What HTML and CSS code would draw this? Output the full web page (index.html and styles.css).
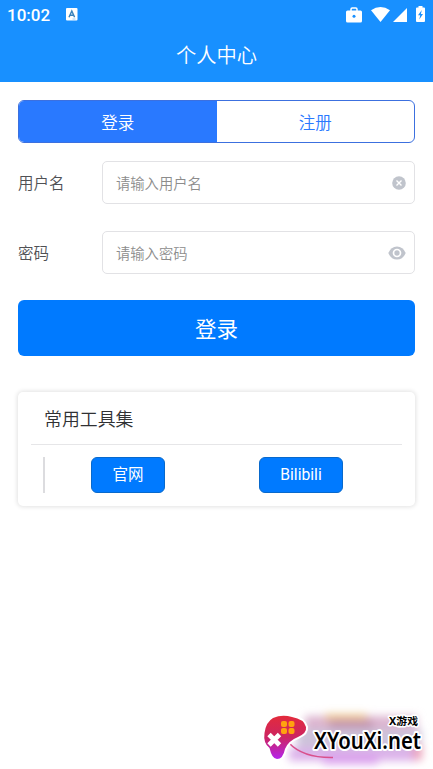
FILE: index.html
```html
<!DOCTYPE html>
<html lang="zh-CN">
<head>
<meta charset="utf-8">
<title>个人中心</title>
<link rel="stylesheet" href="styles.css">
</head>
<body>
<header class="top">
  <div class="status">
    <span class="time">10:02</span>
    <svg class="app-icon" width="12" height="13" viewBox="0 0 12 13"><rect width="11.5" height="12.6" rx="1" fill="#fff"/><path d="M3 9.2 5.8 3l2.8 6.2M4 7.3h3.600" fill="none" stroke="#3b84bd" stroke-width="1.500"/><path d="M6.500 11h3" stroke="#9ccdf5"/></svg>
    <span class="spacer"></span>
    <svg class="case" width="16" height="16" viewBox="0 0 16 16"><path d="M5 4V2.200Q5 1 6.200 1h3.600Q11 1 11 2.200V4" fill="none" stroke="#fff" stroke-width="1.500"/><rect y="3.500" width="16" height="12" rx="1.500" fill="#fff"/><circle cx="8" cy="9.300" r="1.500" fill="#1890ff"/></svg>
    <svg class="wifi" width="19" height="15" viewBox="0 0 19 15"><path d="M0 3.200Q9.500-3.200 19 3.200L9.500 15Z" fill="#fff"/></svg>
    <svg class="signal" width="14" height="14" viewBox="0 0 14 14"><path d="M14 0v14H0Z" fill="#fff"/></svg>
    <svg class="battery" width="9" height="16" viewBox="0 0 9 16"><path d="M2.500 0h4v1.500H8q1 0 1 1V15q0 1-1 1H1q-1 0-1-1V2.500q0-1 1-1h1.500Z" fill="#fff"/><path d="M5.800 4 2 9.300h2.200L3.300 13.500 7 8H4.900Z" fill="#1890ff"/></svg>
  </div>
  <h1 class="title">个人中心</h1>
</header>
<main class="content">
  <nav class="tabs"><span class="tab active">登录</span><span class="tab">注册</span></nav>
  <div class="field">
    <span class="label">用户名</span>
    <div class="input"><span>请输入用户名</span>
      <svg width="14" height="14" viewBox="0 0 14 14"><circle cx="7" cy="7" r="6.800" fill="#c0c4cc"/><path d="m4.500 4.500 5 5m0-5-5 5" stroke="#fff" stroke-width="1.400"/></svg>
    </div>
  </div>
  <div class="field second">
    <span class="label">密码</span>
    <div class="input"><span>请输入密码</span>
      <svg width="18" height="14" viewBox="0 0 18 14"><path d="M.3 7Q3 .4 9 .4T17.700 7Q15 13.600 9 13.600T.3 7Z" fill="#c0c4cc"/><circle cx="9" cy="7" r="3.500" fill="#c0c4cc" stroke="#fff" stroke-width="1.700"/></svg>
    </div>
  </div>
  <div class="submit">登录</div>
  <section class="card">
    <h2 class="card-title">常用工具集</h2>
    <div class="tools">
      <div class="cell"><span class="tool">官网</span></div>
      <div class="cell"><span class="tool wide">Bilibili</span></div>
    </div>
  </section>
</main>
<svg class="watermark" width="180" height="69" viewBox="0 0 180 69">
  <defs>
    <filter id="soft" x="-30%" y="-50%" width="160%" height="200%"><feGaussianBlur stdDeviation="4.500"/></filter>
    <linearGradient id="pad" x1="0" y1="0" x2="0" y2="1"><stop offset="0" stop-color="#e32b3b"/><stop offset=".5" stop-color="#cc2462"/><stop offset="1" stop-color="#b424ec"/></linearGradient>
  </defs>
  <g filter="url(#soft)">
    <rect x="52" y="16" width="112" height="14" fill="#dcb4cf"/>
    <rect x="72" y="14" width="42" height="7" fill="#edc58f"/>
    <rect x="76" y="20" width="44" height="9" fill="#c293b0"/>
    <rect x="44" y="29" width="124" height="20" fill="#cdc3da"/>
    <rect x="36" y="48" width="129" height="13" fill="#dcb1ea"/>
    <rect x="70" y="56" width="55" height="8" fill="#d99bed"/>
    <rect x="160" y="45" width="9" height="15" fill="#eca0b8"/>
  </g>
  <path d="M36 43Q50 58 80 57.500" fill="none" stroke="#d9508c" stroke-width="1.500"/>
  <path d="M20 18Q29 14 39 17Q51 19 53 27Q54 33 45 37Q35 41 32 49Q30 59 24 59Q19 59 16.500 48Q10 43 11.500 33Q13 22 20 18Z" fill="url(#pad)" stroke="#fff" stroke-width="4" paint-order="stroke"/>
  <g fill="#ffa20f"><rect x="28" y="21" width="6" height="6" rx="2"/><rect x="35.500" y="21" width="6" height="6" rx="2"/><rect x="28" y="28" width="6" height="6" rx="2"/><rect x="35.500" y="28" width="6" height="6" rx="2"/></g>
  <path d="m16 34.500 10.500 10.500m0-10.500L16 45" stroke="#fff" stroke-width="4.800"/>
  <text class="site" x="61" y="49" textLength="107" lengthAdjust="spacingAndGlyphs">XYouXi.net</text>
  <text class="site-name" x="136" y="25" textLength="29" lengthAdjust="spacingAndGlyphs">X游戏</text>
</svg>
</body>
</html>
```
FILE: styles.css
```css
* { box-sizing: border-box; }
body {
  margin: 0;
  height: 769px;
  position: relative;
  overflow: hidden;
  background: #fff;
  font-family: Roboto, "Noto Sans CJK SC", sans-serif;
  color: #606266;
}
svg { display: block; flex: none; }
.top { height: 82px; background: #1890ff; color: #fff; }
.status { height: 30px; padding: 0 8px 0 7px; display: flex; align-items: center; }
.time { font-size: 17px; font-weight: 500; line-height: 30px; width: 59px; }
.app-icon { margin-top: -1px; }
.spacer { flex: 1; }
.case { margin-right: 9px; margin-top: -1px; }
.wifi { margin-right: 3px; margin-top: -1px; }
.signal { margin-right: 9px; }
.battery { margin-top: -2px; }
.title { margin: 0; font-size: 20.3px; font-weight: 350; line-height: 52px; text-align: center; }
.content { padding: 18px 18px 0; }
.tabs { height: 43px; display: flex; border: 1px solid #3c70df; border-radius: 6px; overflow: hidden; }
.tab { flex: 1; color: #2979ff; font-size: 16.5px; font-weight: 350; line-height: 45px; text-align: center; }
.active { background: #2979ff; color: #fff; }
.field { display: flex; align-items: center; margin-top: 18px; }
.second { margin-top: 27px; }
.label { width: 84px; font-size: 15.5px; font-weight: 350; line-height: 24px; padding-top: 2px; color: #505155; }
.input {
  flex: 1;
  height: 43px;
  padding: 0 8px 0 13px;
  border: 1px solid #e2e2e5;
  border-radius: 5px;
  display: flex;
  align-items: center;
  justify-content: space-between;
  font-size: 14.300px;
  font-weight: 350;
  color: #8c8c8c;
}
.submit { height: 56px; margin-top: 26px; border-radius: 6px; background: #007aff; color: #fff; font-size: 21.500px; line-height: 59px; text-align: center; }
.card { height: 114px; margin-top: 36px; padding: 0 13px; border-radius: 5px; box-shadow: 0 0 4px 1px #e3e3e3; }
.card-title { margin: 0; height: 53px; padding-left: 13px; border-bottom: 1px solid #e6e6e8; font-size: 17.900px; font-weight: 350; line-height: 56px; color: #303133; }
.tools { height: 36px; margin: 12px 13px 0 12px; border-left: 2px solid #dcdcdf; display: grid; grid-template-columns: 166px 1fr; }
.cell { display: flex; justify-content: center; }
.cell + .cell { justify-content: flex-start; padding-left: 48px; }
.tool { width: 74px; height: 36px; border: 1px solid #0869cc; border-radius: 6px; background: #007aff; color: #fff; font-size: 15.500px; line-height: 34px; text-align: center; }
.wide { width: 84px; font-size: 15.700px; }
.watermark { position: absolute; left: 253px; top: 700px; }
.site, .site-name { fill: #000; stroke: #fff; stroke-width: 4px; stroke-linejoin: round; paint-order: stroke; font-family: "Noto Sans", "Noto Sans CJK SC", sans-serif; font-weight: 700; }
.site { font-size: 23.500px; font-weight: 600; }
.site-name { font-size: 10.500px; stroke-width: 3px; }
```
